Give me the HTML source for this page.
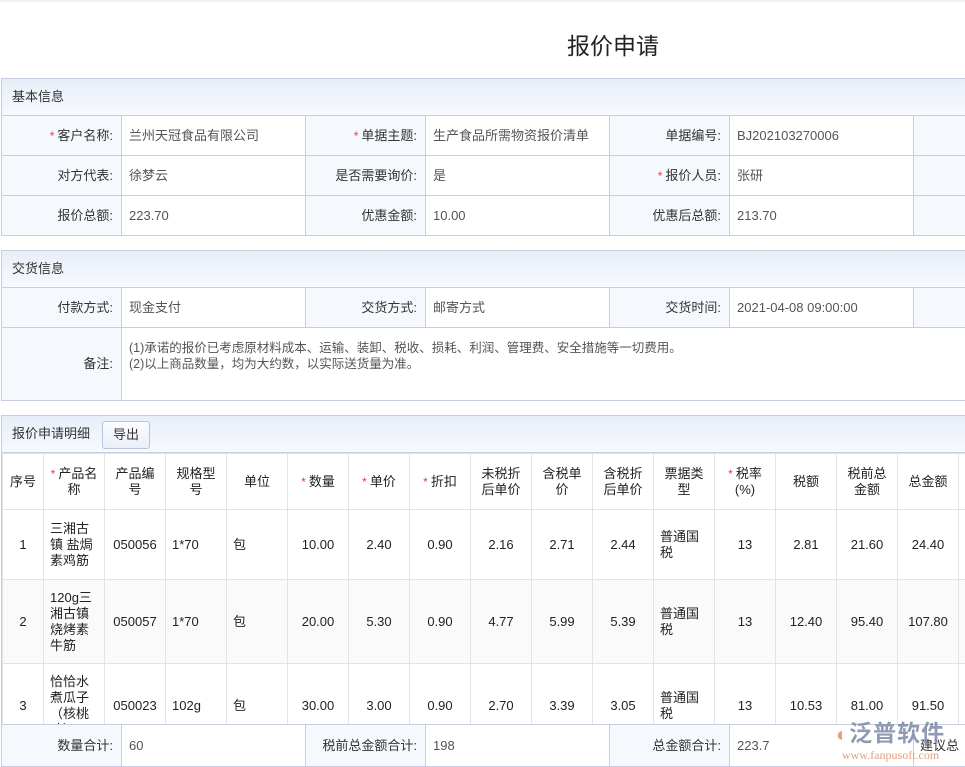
<!DOCTYPE html>
<html><head><meta charset="utf-8"><style>
*{box-sizing:border-box;margin:0;padding:0}
body{width:965px;height:767px;overflow:hidden;background:#fff;font-family:"Liberation Sans","Noto Sans CJK SC",sans-serif;font-size:13px;color:#333;position:relative}
.top{position:absolute;left:0;top:0;width:965px;height:2px;background:#eef0f3}
h1{position:absolute;left:0;width:1226px;top:27px;text-align:center;font-size:23px;font-weight:normal;color:#222}
.sec{position:absolute;left:1px;width:964px;border:1px solid #c5cfdf;border-right:none;overflow:hidden}
.hd{height:37px;background:linear-gradient(#e8eef8,#f6f9fd);border-bottom:1px solid #c5cfdf;padding-left:10px;line-height:36px;color:#333}
.row{display:flex;height:40px;border-bottom:1px solid #c5cfdf;width:1100px}
.row:last-child{border-bottom:none}
.l{width:120px;background:#f5f8fd;text-align:right;padding-right:8px;line-height:39px;border-right:1px solid #c5cfdf;flex:none}
.v{width:184px;padding-left:7px;line-height:39px;color:#555;border-right:1px solid #c5cfdf;flex:none}
.s{color:#f33;font-size:12px;margin-right:3px}
table{border-collapse:collapse;table-layout:fixed;position:absolute;left:0;top:37px;width:1017px}
td{border:1px solid #e3e3e3;text-align:center;color:#222;font-size:13px;line-height:16px;padding:0 5px}
.tb td.t{text-align:left;padding-left:6px}
.btn{display:inline-block;border:1px solid #b8c6dc;border-radius:3px;background:linear-gradient(#fafcff,#eaf0f8);height:28px;line-height:26px;padding:0 10px;margin-left:12px;vertical-align:middle}
</style></head><body>
<div class="top"></div>
<h1>报价申请</h1>

<div class="sec" style="top:78px;height:158px">
<div class="hd">基本信息</div>
<div class="row"><div class="l"><span class="s">*</span>客户名称:</div><div class="v">兰州天冠食品有限公司</div><div class="l"><span class="s">*</span>单据主题:</div><div class="v">生产食品所需物资报价清单</div><div class="l">单据编号:</div><div class="v">BJ202103270006</div><div class="l">主</div></div>
<div class="row"><div class="l">对方代表:</div><div class="v">徐梦云</div><div class="l">是否需要询价:</div><div class="v">是</div><div class="l"><span class="s">*</span>报价人员:</div><div class="v">张研</div><div class="l"></div></div>
<div class="row"><div class="l">报价总额:</div><div class="v">223.70</div><div class="l">优惠金额:</div><div class="v">10.00</div><div class="l">优惠后总额:</div><div class="v">213.70</div><div class="l"></div></div>
</div>

<div class="sec" style="top:250px;height:151px">
<div class="hd">交货信息</div>
<div class="row"><div class="l">付款方式:</div><div class="v">现金支付</div><div class="l">交货方式:</div><div class="v">邮寄方式</div><div class="l">交货时间:</div><div class="v">2021-04-08 09:00:00</div><div class="l">主</div></div>
<div class="row" style="height:72px"><div class="l" style="line-height:72px">备注:</div><div class="v" style="width:900px;line-height:16px;padding-top:12px;font-size:12.5px;border-right:none">(1)承诺的报价已考虑原材料成本、运输、装卸、税收、损耗、利润、管理费、安全措施等一切费用。<br>(2)以上商品数量，均为大约数，以实际送货量为准。</div></div>
</div>

<div class="sec" style="top:415px;height:352px">
<div class="hd" style="line-height:36px">报价申请明细<span class="btn">导出</span></div>
<table class="tb">
<colgroup><col style="width:41px"><col style="width:61px"><col style="width:61px"><col style="width:61px"><col style="width:61px"><col style="width:61px"><col style="width:61px"><col style="width:61px"><col style="width:61px"><col style="width:61px"><col style="width:61px"><col style="width:61px"><col style="width:61px"><col style="width:61px"><col style="width:61px"><col style="width:61px"><col style="width:61px"></colgroup>
<tr style="height:56px"><td style="padding:0">序号</td><td><span class="s">*</span>产品名称</td><td>产品编号</td><td>规格型号</td><td>单位</td><td><span class="s">*</span>数量</td><td><span class="s">*</span>单价</td><td><span class="s">*</span>折扣</td><td>未税折后单价</td><td>含税单价</td><td>含税折后单价</td><td>票据类型</td><td><span class="s">*</span>税率(%)</td><td>税额</td><td>税前总金额</td><td>总金额</td><td></td></tr>
<tr style="height:70px"><td>1</td><td class="t">三湘古镇 盐焗素鸡筋</td><td style="padding:0">050056</td><td class="t">1*70</td><td class="t">包</td><td>10.00</td><td>2.40</td><td>0.90</td><td>2.16</td><td>2.71</td><td>2.44</td><td class="t">普通国税</td><td>13</td><td>2.81</td><td>21.60</td><td>24.40</td><td></td></tr>
<tr style="height:84px;background:#fafafa"><td>2</td><td class="t">120g三湘古镇烧烤素牛筋</td><td style="padding:0">050057</td><td class="t">1*70</td><td class="t">包</td><td>20.00</td><td>5.30</td><td>0.90</td><td>4.77</td><td>5.99</td><td>5.39</td><td class="t">普通国税</td><td>13</td><td>12.40</td><td>95.40</td><td>107.80</td><td></td></tr>
<tr style="height:84px"><td>3</td><td class="t">恰恰水煮瓜子（核桃味）</td><td style="padding:0">050023</td><td class="t">102g</td><td class="t">包</td><td>30.00</td><td>3.00</td><td>0.90</td><td>2.70</td><td>3.39</td><td>3.05</td><td class="t">普通国税</td><td>13</td><td>10.53</td><td>81.00</td><td>91.50</td><td></td></tr>
</table>
<div class="row" style="position:absolute;left:0;top:308px;height:44px;border-top:1px solid #c5cfdf;background:#fff"><div class="l" style="line-height:42px">数量合计:</div><div class="v" style="line-height:42px">60</div><div class="l" style="line-height:42px">税前总金额合计:</div><div class="v" style="line-height:42px">198</div><div class="l" style="line-height:42px">总金额合计:</div><div class="v" style="line-height:42px">223.7</div><div class="l" style="line-height:42px;text-align:left;padding-left:6px;background:#fff">建议总</div></div>
</div>
<div style="position:absolute;left:836px;top:719px;font-size:23px;color:#7d8aa6;font-weight:bold;letter-spacing:1px;opacity:.85;line-height:28px"><span style="color:#e0906a;font-size:20px">◐</span>泛普软件</div>
<div style="position:absolute;left:842px;top:748px;font-size:12px;color:#e0a080;font-family:'Liberation Serif',serif">www.fanpusoft.com</div>
</body></html>
